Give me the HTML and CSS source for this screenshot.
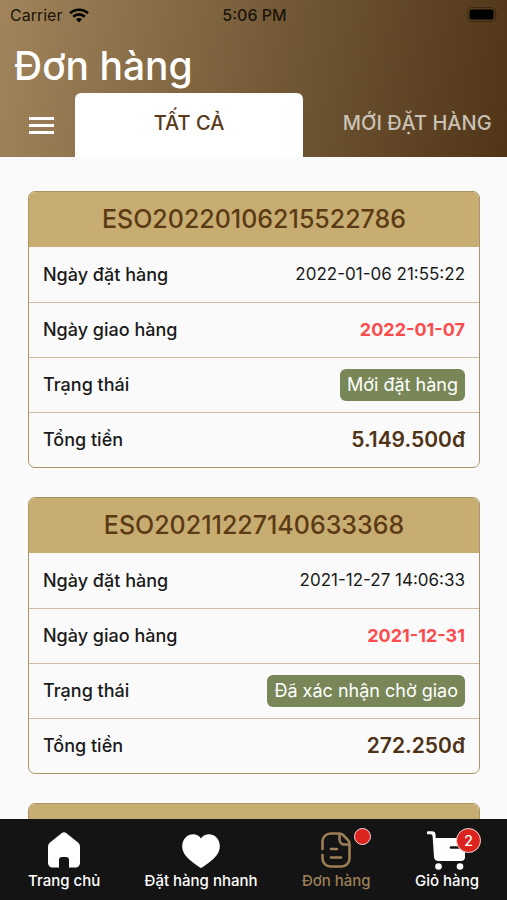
FILE: index.html
```html
<!DOCTYPE html>
<html lang="vi">
  <head>
    <meta charset="UTF-8" />
    <meta name="viewport" content="width=device-width, initial-scale=1.0" />
    <title>Đơn hàng</title>
    <link rel="stylesheet" href="styles.css">
  </head>
  <body>
    <header class="header">
      <div class="status-bar">
        <div class="carrier">
          <span>Carrier</span>
          <svg width="20" height="15" viewBox="0 0 20 15" fill="none" stroke="#000" stroke-width="2.6">
            <path d="M1 5.3a13 13 0 0 1 18 0" />
            <path d="M4.2 8.7a8.3 8.3 0 0 1 11.6 0" />
            <path d="M10 14.5l-3-3.2a4.4 4.4 0 0 1 6 0z" fill="#000" stroke="none" />
          </svg>
        </div>
        <span class="clock">5:06 PM</span>
        <div class="battery">
          <svg width="32" height="16" viewBox="0 0 32 16">
            <rect x="0.5" y="0.5" width="28" height="14" rx="4" fill="none" stroke="#000" stroke-opacity="0.3" />
            <rect x="2.5" y="2.5" width="24" height="10" rx="2" fill="#000" />
            <path d="M30 5.5a2.600 2.600 0 0 1 0 4z" fill="#000" fill-opacity="0.3" />
          </svg>
        </div>
      </div>
      <h1 class="title">Đơn hàng</h1>
      <div class="tabs">
        <button class="menu-btn" aria-label="Menu">
          <svg width="25" height="17" viewBox="0 0 25 17" fill="#fff">
            <path d="M0 0h25v3H0zM0 7h25v3H0zM0 14h25v3H0z" />
          </svg>
        </button>
        <button class="tab active">TẤT CẢ</button>
        <button class="tab">MỚI ĐẶT HÀNG</button>
      </div>
    </header>

    <main class="orders">
      <article class="order">
        <h2 class="order-code">ESO20220106215522786</h2>
        <dl>
          <div class="row">
            <dt>Ngày đặt hàng</dt>
            <dd class="created">2022-01-06 21:55:22</dd>
          </div>
          <div class="row">
            <dt>Ngày giao hàng</dt>
            <dd class="delivery">2022-01-07</dd>
          </div>
          <div class="row">
            <dt>Trạng thái</dt>
            <dd class="status">Mới đặt hàng</dd>
          </div>
          <div class="row">
            <dt>Tổng tiền</dt>
            <dd class="total">5.149.500đ</dd>
          </div>
        </dl>
      </article>

      <article class="order">
        <h2 class="order-code">ESO20211227140633368</h2>
        <dl>
          <div class="row">
            <dt>Ngày đặt hàng</dt>
            <dd class="created">2021-12-27 14:06:33</dd>
          </div>
          <div class="row">
            <dt>Ngày giao hàng</dt>
            <dd class="delivery">2021-12-31</dd>
          </div>
          <div class="row">
            <dt>Trạng thái</dt>
            <dd class="status">Đã xác nhận chờ giao</dd>
          </div>
          <div class="row">
            <dt>Tổng tiền</dt>
            <dd class="total">272.250đ</dd>
          </div>
        </dl>
      </article>

      <article class="order">
        <h2 class="order-code"></h2>
      </article>
    </main>

    <nav class="bottom-nav">
      <a href="#" class="nav-item">
        <span class="icon">
          <svg width="34" height="36" viewBox="0 0 34 36" fill="#fff">
            <path d="M14.5 1.2a4 4 0 0 1 5 0l11.500 9.300a5 5 0 0 1 2 4V31a4.500 4.500 0 0 1-4.500 4.500H22V28a3 3 0 0 0-3-3h-4a3 3 0 0 0-3 3v7.500H5.500A4.500 4.500 0 0 1 1 31V14.500a5 5 0 0 1 2-4z" />
          </svg>
        </span>
        Trang chủ
      </a>
      <a href="#" class="nav-item">
        <span class="icon">
          <svg width="40" height="36" viewBox="0 0 40 36" fill="#fff">
            <path d="M20 6.500C16.500 1 9 1.200 5 5 0 10 0 18 4.500 23.500 8.500 28.500 14 32 18.500 35.300a2.500 2.500 0 0 0 3 0C26 32 31.500 28.500 35.500 23.500 40 18 40 10 35 5 31 1.200 23.500 1 20 6.500z" />
          </svg>
        </span>
        Đặt hàng nhanh
      </a>
      <a href="#" class="nav-item current">
        <span class="icon">
          <svg width="30" height="36" viewBox="0 0 30 36" fill="none" stroke="#9b7f57" stroke-width="2.6" stroke-linecap="round" stroke-linejoin="round">
            <path d="M1.500 17V9.500a8 8 0 0 1 8-8h9a5 5 0 0 1 3.500 1.500l4.500 4.500a6 6 0 0 1 2 4.500v14.500a8 8 0 0 1-8 8h-11a8 8 0 0 1-8-8V23" />
            <path d="M18.500 2v5.500a5 5 0 0 0 5 5h4.500M10 17h6M10 25.500h10" />
          </svg>
          <span class="dot"></span>
        </span>
        Đơn hàng
      </a>
      <a href="#" class="nav-item">
        <span class="icon">
          <svg width="40" height="40" viewBox="0 0 40 40" fill="#fff">
            <path d="M1 1.200h4a3.500 3.500 0 0 1 3.500 3.300L8.700 8H38v19a4 4 0 0 1-4 4H11.500A4.500 4.500 0 0 1 7 27L5.600 6a2 2 0 0 0-2-1.800H1.500a1.500 1.500 0 0 1-.5-3z" />
            <circle cx="11.500" cy="36.500" r="3.300" />
            <circle cx="33" cy="36.500" r="3.300" />
            <path d="M24 17.500h8" stroke="#141414" stroke-width="2.5" stroke-linecap="round" />
          </svg>
          <span class="count">2</span>
        </span>
        Giỏ hàng
      </a>
    </nav>
  </body>
</html>
```
FILE: styles.css
```css
* {
  box-sizing: border-box;
  margin: 0;
  padding: 0;
}

body {
  display: flex;
  flex-direction: column;
  height: 100vh;
  background-color: #fafafa;
  color: #1a1a1a;
  font-family: Inter, "Noto Sans", sans-serif;
  font-size: 18px;
}

button {
  border: none;
  background: none;
  font-family: inherit;
}

.header {
  flex-shrink: 0;
  background: linear-gradient(98deg, #a1845b, #6b5230 63%, #503517);
}

.status-bar {
  display: grid;
  grid-template-columns: 1fr auto 1fr;
  align-items: center;
  height: 30px;
  padding: 0 8px 0 10px;
  color: #1c140a;
  font-size: 16px;
}
.carrier {
  display: flex;
  align-items: center;
  gap: 7px;
}
.clock {
  font-weight: 500;
}
.battery {
  display: flex;
  justify-content: flex-end;
}

.title {
  height: 63px;
  padding-left: 14px;
  color: #fff;
  font-size: 39px;
  font-weight: 500;
  line-height: 72px;
}

.tabs {
  display: flex;
  height: 64px;
  overflow: hidden;
}
.menu-btn {
  flex: 0 0 75px;
  display: flex;
  align-items: center;
  justify-content: center;
  padding-left: 8px;
}
.tab {
  flex: 0 0 45%;
  padding-bottom: 4px;
  color: #c9c1b6;
  font-size: 20px;
  font-weight: 500;
  white-space: nowrap;
}
.tab.active {
  border-radius: 6px 6px 0 0;
  background-color: #fff;
  color: #5a3a1c;
}

.orders {
  flex: 1;
  display: flex;
  flex-direction: column;
  gap: 29px;
  min-height: 0;
  padding: 34px 27px 0 28px;
  overflow-y: auto;
  scrollbar-width: none;
}
.order {
  flex-shrink: 0;
  border: 1px solid #ab9365;
  border-radius: 7px;
  overflow: hidden;
}
.order-code {
  height: 55px;
  background-color: #c8ad72;
  color: #5b3a14;
  font-size: 25px;
  font-weight: 500;
  line-height: 55px;
  text-align: center;
}
.row {
  display: flex;
  align-items: center;
  justify-content: space-between;
  height: 55px;
  padding: 0 14px 1px;
}
.row + .row {
  border-top: 1px solid #cdbf9f;
}
.row dt {
  font-weight: 500;
}
.created {
  font-size: 17px;
}
.delivery {
  color: #fb4d4d;
  font-weight: 700;
}
.status {
  padding: 0 7px;
  border-radius: 6px;
  background-color: #798758;
  color: #fff;
  line-height: 32px;
}
.total {
  color: #4f3317;
  font-size: 21px;
  font-weight: 600;
}

.bottom-nav {
  flex-shrink: 0;
  display: flex;
  justify-content: space-between;
  height: 81px;
  padding: 10px 28px 0;
  background-color: #141414;
}
.nav-item {
  display: flex;
  flex-direction: column;
  align-items: center;
  color: #fff;
  font-size: 15px;
  font-weight: 500;
  line-height: 22px;
  text-decoration: none;
  white-space: nowrap;
}
.nav-item.current {
  color: #9b7f57;
}
.icon {
  position: relative;
  display: flex;
  align-items: center;
  height: 41px;
}
.dot,
.count {
  position: absolute;
  border: 1px solid #f3d6d6;
  border-radius: 50%;
  background-color: #dc241f;
}
.dot {
  top: -1px;
  right: -20px;
  width: 17px;
  height: 17px;
}
.count {
  top: -1px;
  right: -14px;
  width: 25px;
  height: 25px;
  font-size: 14px;
  line-height: 23px;
  text-align: center;
}
```
